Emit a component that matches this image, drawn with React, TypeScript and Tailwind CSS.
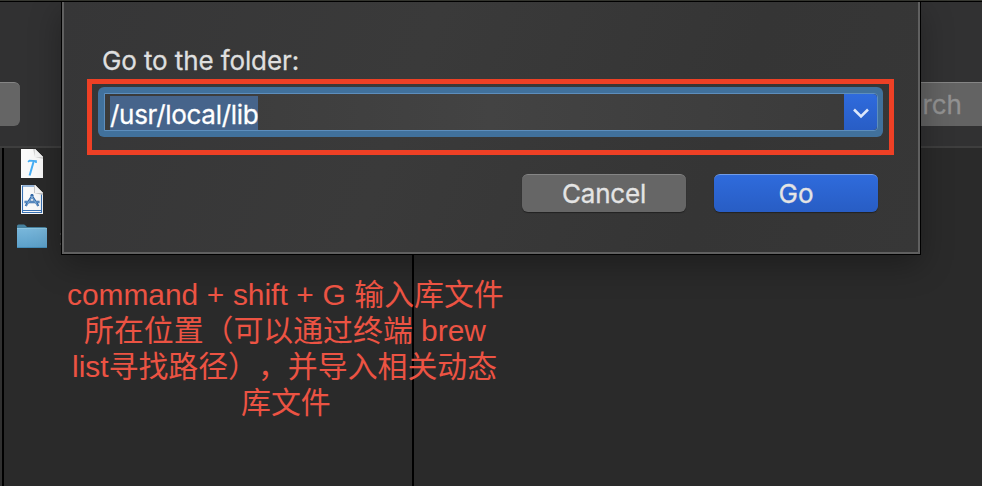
import type { ReactNode } from "react";

function HammerDocument() {
  return (
    <svg className="block h-[30px] w-[24px]" viewBox="0 0 24 30">
      <path d="M1 0h14l8 8v21H1z" fill="#fafafa" />
      <path d="M13 0h2l8 8v2l-8-2z" fill="#d6d6d6" />
      <path d="M15 0l8 8h-8z" fill="#f4f4f4" />
      <path d="M8 12.800l1.500-1.200L16 12.100v2" fill="none" stroke="#45aef5" strokeWidth="1.700" />
      <path d="M13.800 12L9.600 26.500" fill="none" stroke="#45aef5" strokeWidth="2" />
    </svg>
  );
}

function AppDocument() {
  return (
    <svg className="block h-[30px] w-[24px]" viewBox="0 0 24 30">
      <path d="M1 0h14l8 8v21H1z" fill="#fafafa" />
      <path d="M14 1H2.500v26.500h19V9" fill="none" stroke="#3972b4" strokeWidth="1.100" />
      <path d="M2.500 25.500h19" stroke="#3972b4" strokeWidth="1" />
      <path d="M14 0h1l8 8v2l-9-2z" fill="#c9c9c9" />
      <path d="M15 0l8 8h-8z" fill="#f6f6f6" />
      <path d="M11 9.500l7.300 11.500M13 9.500L5.700 21M4.500 17h15" fill="none" stroke="#356aa8" strokeWidth="2.300" />
      <path d="M4.500 17h15M11.500 11l6 9.500M12.500 11l-6 9.500" fill="none" stroke="#8cb8df" strokeWidth=".8" />
    </svg>
  );
}

function Folder() {
  return (
    <svg className="block h-[25px] w-[32px]" viewBox="0 0 32 25">
      <defs>
        <linearGradient id="folder" x2="0" y2="1">
          <stop stopColor="#78b6da" />
          <stop offset="1" stopColor="#5ba0ca" />
        </linearGradient>
      </defs>
      <path d="M1 2q0-1.500 1.500-1.500H8q1 0 2 1.500l1 1h18q2 0 2 2v4H1z" fill="#46819f" />
      <path d="M1 5h30v18q0 1-1 1H2q-1 0-1-1z" fill="url(#folder)" />
      <path d="M1 4.500h30" stroke="#8bc4df" />
      <path d="M1 23.500h30" stroke="#438bb7" />
    </svg>
  );
}

function NoteLine({ children, className }: { children: ReactNode; className: string }) {
  return <div className={`h-9 whitespace-pre ${className}`}>{children}</div>;
}

export default function App() {
  return (
    <main className="relative flex h-[486px] w-[982px] flex-col overflow-hidden bg-[#2a2a2a] font-['Inter',sans-serif]">
      <div className="h-px shrink-0 bg-[#373832]" />
      <div className="h-px shrink-0 bg-black" />
      <header className="flex h-[146px] shrink-0 items-start justify-between border-b-2 border-[#3e3e3e] bg-[#313132] pt-20">
        <div className="h-11 w-5 rounded-r-[6px] border-t border-[#858585] bg-[#656565]" />
        <div className="flex h-11 w-[72px] items-center justify-end border-t border-[#858585] bg-[#636363] pr-[20px] text-[26px] text-[#929292] [-webkit-text-stroke:0.3px_#929292]">
          Search
        </div>
      </header>
      <section className="flex flex-1">
        <div className="w-1 border-r-2 border-black bg-[#303030]" />
        <div className="flex w-[410px] flex-col border-r-2 border-black pl-3">
          <div className="flex flex-col gap-1.5 pt-px pl-1 [&>svg]:shrink-0">
            <HammerDocument />
            <AppDocument />
          </div>
          <div className="mt-[9px] flex gap-3">
            <Folder />
            <div className="flex flex-col gap-2 pt-[9px]">
              <i className="block h-[2px] w-[2px] bg-[#484848]" />
              <i className="block h-[2px] w-[2px] bg-[#484848]" />
            </div>
          </div>
        </div>
        <div className="flex-1" />
      </section>

      <div className="absolute top-[2px] left-[61px] h-[253px] w-[860px] border-x border-b border-black shadow-[0_10px_30px_rgba(0,0,0,0.300)]">
        <div className="flex h-full flex-col border-x-2 border-b-2 border-[#606060] bg-[linear-gradient(110deg,#363637,#3a3a3a_40%,#353535_75%,#373737)] pt-[44px] pl-[23px]">
          <label className="mb-1 flex h-[29px] items-center pl-[15px] text-[26px] tracking-[-0.110px] whitespace-nowrap text-[#dfdfdf] [-webkit-text-stroke:0.3px_#dfdfdf]">
            Go to the folder:
          </label>
          <div className="h-[76px] w-[807px] border-[5px] border-[#ee4025] pt-[3px] pl-[6px]">
            <div className="flex h-[50px] w-[785px] rounded-[6px] bg-[#41719c] py-[6px] pr-[5px] pl-[6px]">
              <div className="flex h-[38px] w-full rounded-r-[4px] border border-[#5d8ebd] bg-linear-to-r from-[#3a3a3a] via-[#434343] to-[#3a3a3a]">
                <div className="flex flex-1 items-start pt-[2px] pl-[5px]">
                  <span className="flex h-[34px] w-[148px] items-center bg-[#46648b] pt-[3px] text-[26px] tracking-[-0.300px] text-white [-webkit-text-stroke:0.3px_white]">/usr/local/lib</span>
                </div>
                <div className="flex w-[33px] items-center justify-center rounded-r-[4px] bg-linear-to-b from-[#2f6bdd] to-[#285dc5] pt-px pl-px">
                  <svg width="18" height="18" viewBox="0 0 18 18" fill="none" stroke="#dce7fb" strokeWidth="2.600"><path d="M2 5.500l7 7 7-7" /></svg>
                </div>
              </div>
            </div>
          </div>
          <div className="mt-[19px] flex gap-7 pl-[435px] text-[26px] text-[#e4e4e4] [-webkit-text-stroke:0.3px_#e4e4e4]">
            <button className="flex h-[38px] w-[164px] items-center justify-center rounded-[6px] border-t border-[#858585] bg-[#666] tracking-[-0.200px] shadow-[0_1px_1px_#222]">Cancel</button>
            <button className="flex h-[38px] w-[164px] items-center justify-center rounded-[6px] border-t border-[#719ce8] bg-linear-to-b from-[#2f6bdc] to-[#285dc4] shadow-[0_1px_1px_#222]">Go</button>
          </div>
        </div>
      </div>

      <div className="absolute top-[277px] left-[60px] w-[450px] font-['Liberation_Sans','Noto_Sans_CJK_SC',sans-serif] text-[29.900px] leading-9 text-[#ec5343] [text-spacing-trim:space-all]">
        <NoteLine className="pl-[7px] [word-spacing:0.300px]">command + shift + G 输入库文件</NoteLine>
        <NoteLine className="pl-[24px]">所在位置（可以通过终端 brew</NoteLine>
        <NoteLine className="pl-[12px]">list寻找路径），并导入相关动态</NoteLine>
        <NoteLine className="pl-[181px]">库文件</NoteLine>
      </div>
    </main>
  );
}
